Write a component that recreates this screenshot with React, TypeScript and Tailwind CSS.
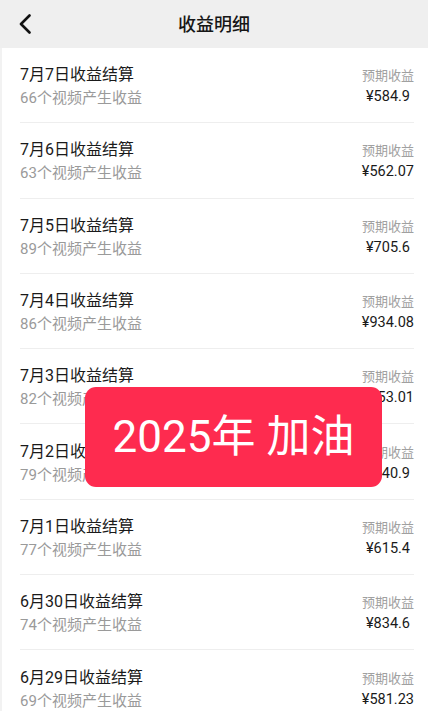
import React from "react";

const rows = [
  { date: "7月7日", count: 66, amount: "584.9" },
  { date: "7月6日", count: 63, amount: "562.07" },
  { date: "7月5日", count: 89, amount: "705.6" },
  { date: "7月4日", count: 86, amount: "934.08" },
  { date: "7月3日", count: 82, amount: "753.01" },
  { date: "7月2日", count: 79, amount: "640.9" },
  { date: "7月1日", count: 77, amount: "615.4" },
  { date: "6月30日", count: 74, amount: "834.6" },
  { date: "6月29日", count: 69, amount: "581.23" },
];

function BackIcon() {
  return (
    <svg width="12" height="20" viewBox="0 0 12 20" fill="none">
      <path d="M10.5 1.5 2 10l8.5 8.5" stroke="#111" strokeWidth="2.6" strokeLinecap="round" strokeLinejoin="round" />
    </svg>
  );
}

export default function App() {
  return (
    <div className="relative h-[711px] w-[428px] overflow-hidden bg-white font-['Roboto','Noto_Sans_CJK_SC',sans-serif]">
      {/* header */}
      <div className="relative flex h-[48px] items-center justify-center bg-[#efefef]">
        <div className="absolute left-[19px] top-[14px]">
          <BackIcon />
        </div>
        <p className="text-[18px] font-medium text-[#161616]">收益明细</p>
      </div>

      {/* list */}
      <div className="border-l-2 border-[#f2f2f2] pl-[18px] pr-[14px]">
        {rows.map((r) => (
          <div key={r.date} className="flex h-[75.3px] items-center justify-between border-b border-[#eeeeee] pt-[3px]">
            <div className="flex flex-col gap-[1px]">
              <p className="text-[16px] leading-[22px] text-[#1a1a1a]">{r.date}收益结算</p>
              <p className="text-[15px] leading-[22px] text-[#9a9a9a]">{r.count}个视频产生收益</p>
            </div>
            <div className="flex flex-col items-center gap-[1px]">
              <p className="text-[13px] leading-[20px] text-[#a0a0a0]">预期收益</p>
              <p className="text-[14.5px] leading-[20px] text-[#1a1a1a]">¥{r.amount}</p>
            </div>
          </div>
        ))}
      </div>

      {/* overlay banner */}
      <div className="absolute left-[85px] top-[387px] flex h-[100px] w-[297px] items-center justify-center rounded-[11px] bg-[#fe2b4f]">
        <p className="text-[44px] leading-none text-white">2025年 加油</p>
      </div>
    </div>
  );
}
